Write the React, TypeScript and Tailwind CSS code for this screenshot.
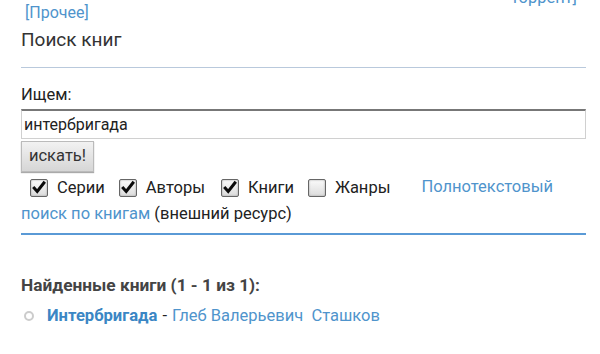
import React from 'react';

const Box: React.FC<{ checked?: boolean }> = ({ checked }) => (
    <span className="inline-flex items-center justify-center w-[18px] h-[18px] border border-[#666] bg-gradient-to-b from-[#fafafa] to-[#dcdcdc] rounded-[2px] shadow-[inset_0_0_2px_#999]">
        {checked && (
            <svg viewBox="0 0 18 18" className="w-[17px] h-[17px]">
                <path d="M2.5 8.5 L7 13.5 L15.5 2.5" fill="none" stroke="#0a0a0a" strokeWidth="3.4" strokeLinejoin="miter" />
            </svg>
        )}
    </span>
);

export default function App() {
    return (
        <div className="w-[600px] h-[354px] overflow-hidden bg-white font-['Roboto',sans-serif] text-[16.5px] text-[#222] relative">
            <div className="flex justify-between pl-[25px] pr-[23px] h-[26px] -mt-[4px]">
                <a className="text-[#4f94cc] mt-[5px] text-[16px]">[Прочее]</a>
                <a className="text-[#4f94cc] -mt-[10px]">торрент]</a>
            </div>

            <div className="px-[21px] pr-[14px]">
                <h2 className="text-[19px] text-[#333] leading-[24px] mt-[6px] pb-[15px] border-b border-[#b9c9dc]">Поиск книг</h2>

                <div className="mt-[18px] leading-[18px]">Ищем:</div>
                <div className="mt-[5px] h-[30px] border border-[#d0d0d0] border-t-[#777] border-t-2 flex items-center px-[2px] text-[16px] text-[#222]">
                    интербригада
                </div>
                <button className="mt-[2px] h-[31px] w-[73px] border border-[#bbb] bg-gradient-to-b from-[#f2f2f2] to-[#d6d6d6] text-[16.5px] text-[#333] shadow-[0_1px_1px_#aaa]">
                    искать!
                </button>

                <div className="mt-[1px] leading-[27px] pr-[14px]">
                    <span className="inline-flex items-center gap-[9px] ml-[9px] align-middle leading-[20px]"><Box checked />Серии</span>
                    <span className="inline-flex items-center gap-[9px] ml-[14px] align-middle leading-[20px]"><Box checked />Авторы</span>
                    <span className="inline-flex items-center gap-[9px] ml-[16px] align-middle leading-[20px]"><Box checked />Книги</span>
                    <span className="inline-flex items-center gap-[9px] ml-[14px] align-middle leading-[20px]"><Box />Жанры</span>
                    <a className="text-[#4f94cc] ml-[31px]">Полнотекстовый поиск по книгам</a>{' '}
                    (внешний ресурс)
                </div>
                <div className="mt-[6px] border-b-2 border-[#5a9ad6]" />

                <div className="mt-[40px] font-bold text-[17.3px] text-[#444] leading-[20px]">Найденные книги (1 - 1 из 1):</div>
                <div className="mt-[11px] flex items-center leading-[20px]">
                    <span className="w-[10px] h-[10px] rounded-full border-2 border-[#ccc] ml-[3px] mr-[13px]" />
                    <a className="font-bold text-[16.6px] text-[#3a86c4]">Интербригада</a>
                    <span className="mx-[5px]">-</span>
                    <a className="text-[#4f94cc]">Глеб Валерьевич&nbsp; Сташков</a>
                </div>
            </div>
        </div>
    );
}
